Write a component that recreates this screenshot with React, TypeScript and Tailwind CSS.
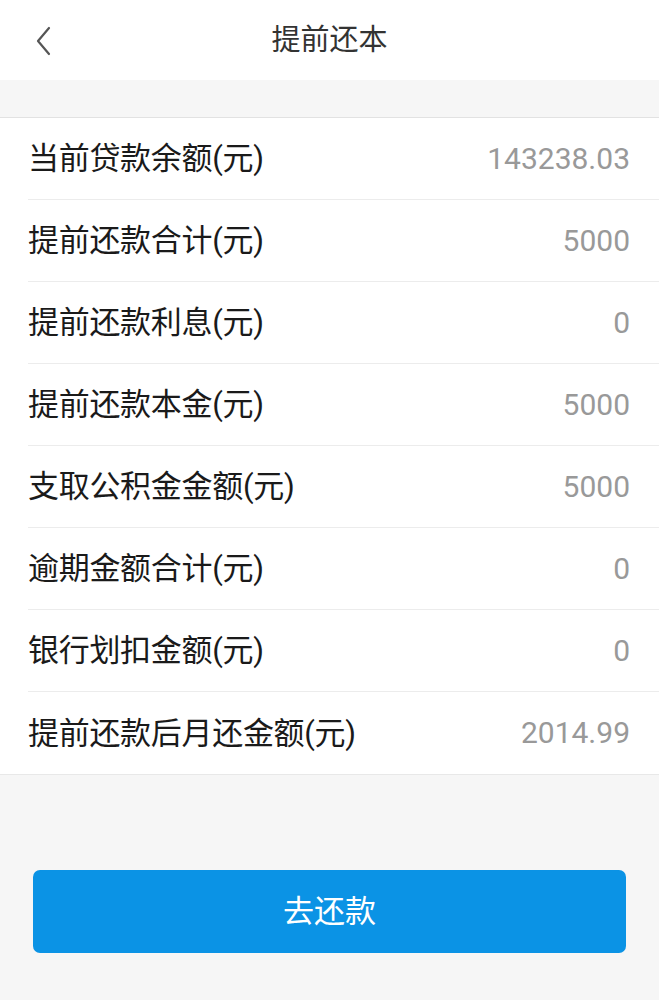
import React from 'react';

const rows: { label: string; value: string }[] = [
  { label: '当前贷款余额(元)', value: '143238.03' },
  { label: '提前还款合计(元)', value: '5000' },
  { label: '提前还款利息(元)', value: '0' },
  { label: '提前还款本金(元)', value: '5000' },
  { label: '支取公积金金额(元)', value: '5000' },
  { label: '逾期金额合计(元)', value: '0' },
  { label: '银行划扣金额(元)', value: '0' },
  { label: '提前还款后月还金额(元)', value: '2014.99' },
];

const cjk = { fontFamily: 'Roboto, "Noto Sans CJK SC", sans-serif' };

export default function App() {
  return (
    <div className="w-[659px] h-[1000px] bg-[#f6f6f6] flex flex-col" style={cjk}>
      {/* Header */}
      <div className="h-[80px] bg-white flex items-center relative">
        <button className="absolute left-[30px] top-[24px] w-[26px] h-[34px] flex items-center justify-center">
          <svg width="18" height="30" viewBox="0 0 18 30" fill="none">
            <path d="M15 2 L4 15 L15 28" stroke="#555" strokeWidth="2.2" strokeLinecap="round" strokeLinejoin="round" />
          </svg>
        </button>
        <div className="flex-1 text-center text-[29px] text-[#333] leading-none">提前还本</div>
      </div>

      {/* Spacer */}
      <div className="h-[38px] border-b border-[#e2e2e2]" />

      {/* List */}
      <div className="bg-white border-b border-[#e8e8e8]">
        {rows.map((r, i) => (
          <div key={r.label} className="h-[82px] pl-[28px] flex">
            <div
              className={`flex-1 flex items-center justify-between pr-[29px] ${
                i < rows.length - 1 ? 'border-b border-[#ececec]' : ''
              }`}
            >
              <span className="text-[31px] text-[#1a1a1a] leading-none tracking-[-0.3px]">{r.label}</span>
              <span className="text-[30px] text-[#999] leading-none">{r.value}</span>
            </div>
          </div>
        ))}
      </div>

      {/* Button */}
      <div className="px-[33px] pt-[95px]">
        <button className="w-full h-[83px] rounded-[7px] bg-[#0b93e5] text-white text-[31px] leading-none flex items-center justify-center">
          去还款
        </button>
      </div>
    </div>
  );
}
